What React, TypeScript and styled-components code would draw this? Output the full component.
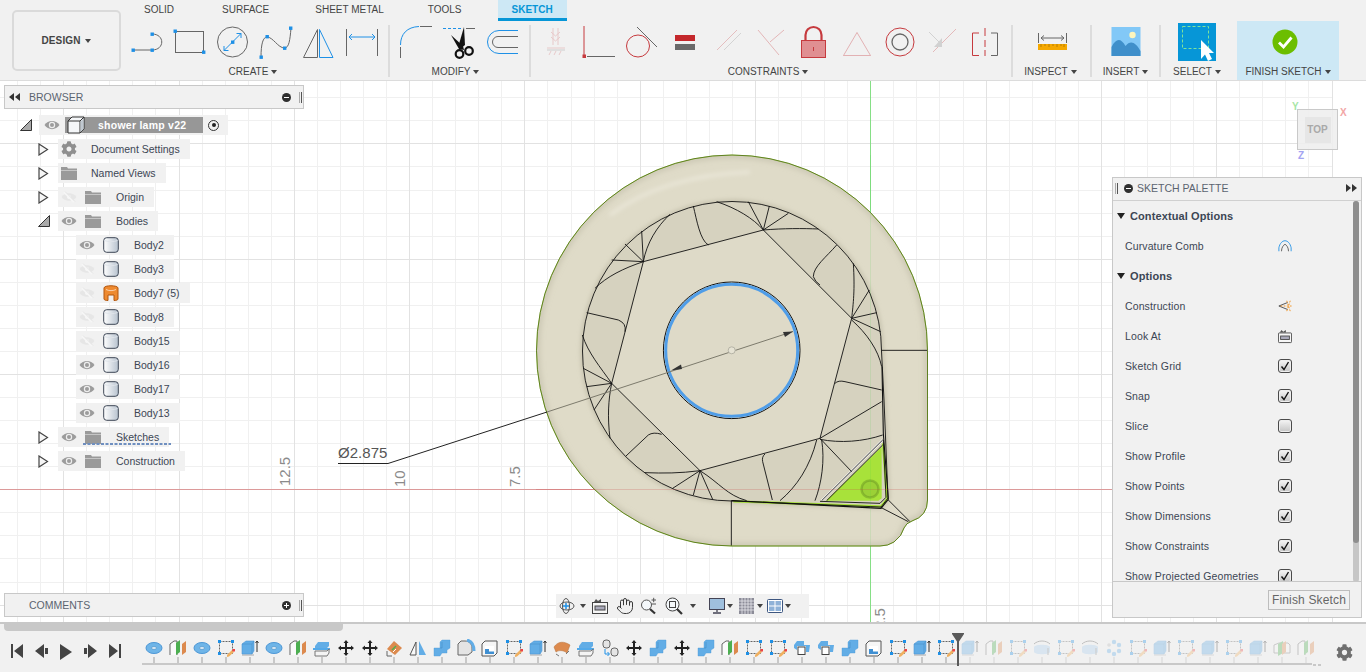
import React from 'react';
import styled, { createGlobalStyle } from 'styled-components';
import { FaCog } from 'react-icons/fa';
import { Hand } from 'lucide-react';

const Global = createGlobalStyle`
  html, body { margin: 0; padding: 0; background: #fff; }
  body { font-family: "Liberation Sans", Arial, sans-serif; overflow: hidden; }
  * { box-sizing: border-box; }
`;

const Page = styled.div`width:1366px;height:672px;display:flex;flex-direction:column;overflow:hidden;color:#3c4654;`;

/* ---------- toolbar ---------- */
const Toolbar = styled.header`height:81px;flex:none;display:flex;background:#f1f1f1;border-bottom:1px solid #dcdcdc;`;
const DesignBtn = styled.div`
  width:109px;height:61px;margin:10px 0 0 12px;flex:none;border:2px solid #dadada;border-radius:5px;
  display:flex;align-items:center;justify-content:center;gap:5px;font-size:10px;font-weight:bold;color:#444;letter-spacing:.1px;
`;
const Caret = styled.i`display:inline-block;width:0;height:0;border-left:3px solid transparent;border-right:3px solid transparent;border-top:4px solid #444;`;
const Ribbon = styled.div`flex:1;display:flex;flex-direction:column;min-width:0;`;
const Tabs = styled.nav`height:21px;display:flex;`;
const Tab = styled.div<{ $on?: boolean; $ml?: number }>`
  height:21px;padding:${p => p.$on ? '0 14px' : '0 23px'};margin-left:${p => p.$ml ?? 0}px;font-size:10px;line-height:20px;
  color:${p => p.$on ? '#0696d7' : '#444'};font-weight:${p => p.$on ? 'bold' : 'normal'};
  background:${p => p.$on ? '#cde8f5' : 'transparent'};
  border-bottom:${p => p.$on ? '3px solid #0696d7' : '0'};
`;
const Groups = styled.div`flex:1;display:flex;padding-left:5px;`;
const Group = styled.section<{ $w: number; $pl?: number }>`
  width:${p => p.$w}px;flex:none;padding-left:${p => p.$pl ?? 0}px;padding-top:3px;position:relative;
  display:flex;flex-direction:column;
`;
const Sep = styled.div`width:2px;height:52px;margin-top:4px;background:#dcdcdc;flex:none;`;
const IconRow = styled.div<{ $center?: boolean; $pr?: number }>`
  height:36px;display:flex;padding-right:${p => p.$pr ?? 0}px;
  justify-content:${p => p.$center ? 'center' : 'flex-start'};align-items:center;
`;
const GroupLabel = styled.div<{ $pr?: number }>`
  margin-top:6px;padding-right:${p => p.$pr ?? 0}px;font-size:10px;line-height:12px;color:#444;display:flex;justify-content:center;align-items:center;gap:3px;
`;
const FinishGroup = styled(Group)`background:#cde8f5;height:59px;`;

const T = ({ x, children }: { x: number; children: React.ReactNode }) => (
  <svg width={43} height={36} viewBox={`${x} 24 43 36`} style={{ flex: 'none' }}>{children}</svg>
);
const Sq = ({ x, y }: { x: number; y: number }) => <rect x={x - 1.5} y={y - 1.5} width={3.4} height={3.4} fill="#1e90e6" />;
const G = '#666';
const B = '#1e90e6';
const R = '#c63a3e';

const CreateIcons = () => (
  <IconRow>
    <T x={126}><g fill="none" stroke={G}><path d="M134 50H152M152 34C165 34 165 50 152 50" /></g><Sq x={133} y={50} /><Sq x={152} y={34} /><Sq x={152} y={50} /></T>
    <T x={169}><rect x="175.500" y="31.500" width="28" height="21" fill="none" stroke={G} /><Sq x={175} y={31} /><Sq x={203.500} y={52} /></T>
    <T x={212}><circle cx="232.500" cy="42" r="15" fill="none" stroke={G} /><path d="M224 50.500L241 33.500M224 46V50.500H228.500M236.500 33.500H241V38" fill="none" stroke={B} /><Sq x={232.500} y={42} /></T>
    <T x={255}><path d="M261 57C261 44 263 37 267 37C273 37 278 48 284.500 48C289 48 290 40 291 28" fill="none" stroke={G} /><Sq x={261} y={57} /><Sq x={267} y={36.500} /><Sq x={284.500} y={48} /><Sq x={290.500} y={28} /></T>
    <T x={298}><path d="M317.500 29.500V57.500H303.500Z" fill="none" stroke={G} /><path d="M319.500 29.500L333 57.500H319.500Z" fill="none" stroke={B} /></T>
    <T x={341}><path d="M346.500 29V56M377.500 29V56" stroke={G} /><path d="M349 37H375M352 34L349 37L352 40M372 34L375 37L372 40" fill="none" stroke={B} /></T>
  </IconRow>
);
const ModifyIcons = () => (
  <IconRow>
    <T x={395}><path d="M400.500 45C400.500 34 407 27 419 26.500" fill="none" stroke={B} /><path d="M400.500 47V58M420 26.500H432" stroke={G} /></T>
    <T x={438}><path d="M443 28.500H462" stroke={B} strokeDasharray="3 2" /><path d="M466 28.500H475" stroke={G} /><path d="M451 35L463 46L464 50L459 49Z" fill="#111" /><path d="M464 27L465 45L460 49L459 44Z" fill="#111" /><circle cx="459.500" cy="54" r="3.800" fill="none" stroke="#111" strokeWidth="2.200" /><circle cx="469" cy="51" r="3.800" fill="none" stroke="#111" strokeWidth="2.200" /></T>
    <T x={481}><path d="M518 30.500H499A11.500 11.500 0 0 0 499 53.500H518" fill="none" stroke={B} /><path d="M518 36.500H498A5.500 5.500 0 0 0 498 47.500H518" fill="none" stroke={G} /></T>
  </IconRow>
);
const ConstraintIcons = () => (
  <IconRow>
    <T x={535}><g opacity=".22" fill="none" stroke={R}><path d="M553 28V45M558 28V45" /><path d="M551 32L555.500 36L560 32M551 37L555.500 41L560 37" /><path d="M547 48H565" /><path d="M549 55L551 51M554 55L556 51M559 55L561 51" /></g><path d="M547 50H565" stroke="#999" opacity=".4" /></T>
    <T x={578}><path d="M584 26V57" stroke={R} /><rect x="582.500" y="54.500" width="3.500" height="3.500" fill={R} /><path d="M587 56.500H615" stroke={G} /></T>
    <T x={621}><ellipse cx="638" cy="46" rx="11.500" ry="11" fill="none" stroke={R} /><path d="M637 27L657 47" stroke={G} /></T>
    <T x={664}><rect x="675" y="35" width="20" height="6" fill="#c4282c" /><rect x="675" y="44" width="20" height="6" fill="#6a6a6a" /></T>
    <T x={707}><g opacity=".28" fill="none"><path d="M717 50L737 30" stroke={R} /><path d="M724 50L741 33" stroke="#888" /></g></T>
    <T x={750}><g opacity=".32" fill="none" stroke={R}><path d="M758 30L779 55" /><path d="M770 42L784 30" /></g></T>
    <T x={793}><path d="M805.500 41V35A8 8 0 0 1 821.500 35V41" fill="none" stroke={R} strokeWidth="2.200" /><rect x="801.500" y="40.500" width="24" height="17" fill="#e08f92" stroke={R} /><path d="M813.500 47V51" stroke={R} /></T>
    <T x={836}><path d="M857 32.500L870.500 55.500H843.500Z" fill="none" stroke={R} opacity=".35" /></T>
    <T x={879}><circle cx="900" cy="42" r="14" fill="none" stroke={R} /><circle cx="900" cy="42" r="8" fill="none" stroke={G} strokeWidth="1.300" /></T>
    <T x={922}><g opacity=".3" fill="none"><path d="M933 52L956 29" stroke={R} /><path d="M929 32L941 44" stroke="#888" /><path d="M942 38V47H934Z" fill="#888" stroke="none" /></g></T>
    <T x={965}><path d="M979 33H972.500V55.500H979" fill="none" stroke={R} /><path d="M991 33H997.500V55.500H991" fill="none" stroke={G} /><path d="M985 28V36M985 40V47M985 50V56" stroke={R} /></T>
  </IconRow>
);

const SmallIcon = styled.svg`flex:none;display:block;`;
const Inspect = () => (
  <SmallIcon width={36} height={36} viewBox="1033 24 36 36">
    <path d="M1037.500 33V43M1065.500 33V43" stroke={G} /><path d="M1040 38H1063M1043 35.500L1040 38L1043 40.500M1060 35.500L1063 38L1060 40.500" fill="none" stroke={G} />
    <rect x="1037" y="44" width="29" height="6" fill="#f5a800" /><path d="M1040 44V47M1044 44V46M1048 44V47M1052 44V46M1056 44V47M1060 44V46M1063 44V47" stroke="#a26e00" strokeWidth=".7" />
  </SmallIcon>
);
const Insert = () => (
  <SmallIcon width={36} height={36} viewBox="1107.500 24 36 36">
    <rect x="1111" y="27" width="29" height="29" fill="#82c8f7" /><circle cx="1132" cy="35" r="3.200" fill="#fdf6bd" />
    <path d="M1111 56V47C1116 38 1120 38 1125 46C1130 40 1135 42 1140 51V56Z" fill="#3f8fca" />
  </SmallIcon>
);
const SelectIco = () => (
  <SmallIcon width={38} height={38} viewBox="1179 23 38 38">
    <rect x="1179" y="23" width="38" height="38" fill="#0696d7" />
    <rect x="1183.500" y="26.500" width="26" height="22" fill="none" stroke="#7fe39a" strokeDasharray="3 2" />
    <path d="M1202 40V59L1206 54.500L1209 61L1213 59L1210 53H1215Z" fill="#fff" />
  </SmallIcon>
);
const FinishIco = () => (
  <SmallIcon width={28} height={28} viewBox="1272 28 28 28">
    <circle cx="1286" cy="42" r="12.500" fill="#6cbe00" /><path d="M1280 42.500L1284.500 47L1292.500 37.500" fill="none" stroke="#fff" strokeWidth="2.800" />
  </SmallIcon>
);

/* ---------- viewport ---------- */
const Viewport = styled.main`flex:1;position:relative;background:#fff;overflow:hidden;`;
const SceneSvg = styled.svg`
  position:absolute;left:0;top:-81px;width:1366px;height:672px;
  .n * { vector-effect: non-scaling-stroke; }
`;
const Panel = styled.aside<{ $top: number }>`
  position:absolute;left:4px;top:${p => p.$top}px;width:300px;height:24px;background:#f1f1f1;border:1px solid #c8c8c8;
  display:flex;align-items:center;font-size:10.500px;color:#5b6470;
`;
const PanelTitle = styled.span`flex:1;`;
const DoubleArrow = styled.span`
  display:block;width:24px;padding-left:4px;flex:none;svg{display:block;}
`;
const RoundBtn = styled.span<{ $mr?: number }>`
  width:9px;height:9px;border-radius:50%;background:#2f2f2f;flex:none;position:relative;
  margin-right:${p => p.$mr ?? 8}px;
  &::before{content:'';position:absolute;left:2px;right:2px;top:4px;height:1px;background:#fff;}
`;
const PlusBtn = styled(RoundBtn)`
  &::after{content:'';position:absolute;top:2px;bottom:2px;left:4px;width:1px;background:#fff;}
`;
const Grip = styled.span<{ $mr?: number }>`width:3px;height:11px;border-left:1px solid #aaa;border-right:1px solid #555;flex:none;margin-right:${p => p.$mr ?? 1}px;`;

const Tree = styled.div`position:absolute;left:0;top:32px;width:300px;`;
const TreeRow = styled.div<{ $pl: number }>`height:24px;padding-left:${p => p.$pl}px;display:flex;align-items:center;font-size:10.500px;color:#3c4654;position:relative;`;
const ExpSlot = styled.span<{ $w?: number }>`width:${p => p.$w ?? 20}px;flex:none;display:flex;align-items:center;svg{display:block;}`;
const RowChip = styled.div`height:20px;display:flex;align-items:center;background:#f1f1f1;padding-right:10px;`;
const RootChip = styled(RowChip)`padding-right:0;width:189px;`;
const IconSlot = styled.span<{ $w: number }>`width:${p => p.$w}px;flex:none;display:flex;align-items:center;justify-content:center;`;
const RowText = styled.span`white-space:nowrap;`;
const RootTitle = styled.div`
  height:16px;width:138px;background:#979797;color:#fff;font-weight:bold;font-size:10.500px;display:flex;align-items:center;
  padding-left:33px;position:relative;white-space:nowrap;letter-spacing:.25px;
`;
const RootCube = styled.svg`position:absolute;left:2px;top:-1px;`;
const Radio = styled.span`width:11px;height:11px;border:1px solid #333;border-radius:50%;margin-left:5px;display:flex;align-items:center;justify-content:center;&::after{content:'';width:4px;height:4px;border-radius:50%;background:#222;}`;
const SketchHatch = styled.svg`position:absolute;left:83px;top:16px;`;

const Eye = ({ off }: { off?: boolean }) => off ? (
  <svg width="16" height="12" viewBox="0 0 16 12"><path d="M0.500 6C4 1 12 1 15.500 6C12 11 4 11 0.500 6Z" fill="#e6e6e6" /><circle cx="8" cy="6" r="2" fill="#f6f6f6" /><path d="M3 1L13 11" stroke="#f6f6f6" strokeWidth="2" /><path d="M4 .500L14 10.500" stroke="#e3e3e3" /></svg>
) : (
  <svg width="16" height="12" viewBox="0 0 16 12"><path d="M0.500 6C4 .500 12 .500 15.500 6C12 11.500 4 11.500 0.500 6Z" fill="#9c9c9c" /><circle cx="8" cy="6" r="3.200" fill="#eee" /><circle cx="8" cy="6" r="2" fill="#9c9c9c" /></svg>
);
const Folder = () => <svg width="16" height="13" viewBox="0 0 16 13"><path d="M0 0H6L7 1.500H16V3H0Z" fill="#9a9a9a" /><rect y="3.500" width="16" height="9.500" fill="#9a9a9a" /></svg>;
const Cyl = ({ orange }: { orange?: boolean }) => (
  <svg width="16" height="16" viewBox="0 0 16 16">
    <defs>
      <linearGradient id="cy" x1="0" x2="1"><stop offset="0" stopColor="#fff" /><stop offset="1" stopColor="#b8c3cf" /></linearGradient>
    </defs>
    {orange ? (
      <g>
        <path d="M1 3C1 0 15 0 15 3V14C15 15 13 15.500 11 15.500V10H5V15.500C3 15.500 1 15 1 14Z" fill="#ee8a30" stroke="#b3560e" />
        <path d="M3 4.500C6 6 10 6 13 4.500" fill="none" stroke="#fff" opacity=".6" />
      </g>
    ) : (
      <g>
        <rect x=".700" y=".700" width="14.600" height="14.600" rx="3" fill="url(#cy)" stroke="#3e4756" />
        <path d="M1.500 3.500C5 5 11 5 14.500 3.500" fill="none" stroke="#dfe4ea" />
      </g>
    )}
  </svg>
);
const ExpRight = () => <svg width="11" height="13" viewBox="0 0 11 13"><path d="M1 1L9.500 6.500L1 12Z" fill="#f6f6f6" stroke="#444" strokeWidth="1.200" /></svg>;
const ExpDown = () => <svg width="12" height="12" viewBox="0 0 12 12"><path d="M11.500 .500V11.500H.500Z" fill="#aaa" stroke="#333" /></svg>;

const bodies: [string, boolean, boolean?][] = [
  ['Body2', false], ['Body3', true], ['Body7 (5)', true, true], ['Body8', true], ['Body15', true],
  ['Body16', false], ['Body17', false], ['Body13', false],
];

/* palette */
const Palette = styled.aside`
  position:absolute;left:1112px;top:96px;width:250px;height:441px;background:#f1f1f1;border:1px solid #c8c8c8;
  display:flex;flex-direction:column;color:#3c4654;
`;
const PalHead = styled.div`height:23px;flex:none;border-bottom:1px solid #d0d0d0;display:flex;align-items:center;padding:0 4px 2px 2px;font-size:10.500px;color:#5b6470;`;
const PalBody = styled.div`flex:1;position:relative;overflow:hidden;`;
const PalFoot = styled.div`height:36px;flex:none;border-top:1px solid #c8c8c8;display:flex;align-items:center;justify-content:flex-end;padding-right:11px;`;
const FinishBtn = styled.div`width:82px;height:20px;border:1px solid #bdbdbd;font-size:12px;color:#666;display:flex;align-items:center;justify-content:center;letter-spacing:.15px;`;
const SecRow = styled.div`height:30px;display:flex;align-items:center;font-size:11px;font-weight:bold;padding-left:4px;gap:5px;color:#3c4654;letter-spacing:.1px;`;
const SecCaret = styled.i`display:block;width:0;height:0;border-left:4px solid transparent;border-right:4px solid transparent;border-top:6px solid #222;`;
const OptRow = styled.div`height:30px;display:flex;align-items:center;font-size:10.500px;padding-left:12px;position:relative;`;
const OptLabel = styled.span`width:153px;flex:none;white-space:nowrap;letter-spacing:.12px;`;
const Check = styled.span`
  width:14px;height:14px;border:1px solid #4a4a4a;border-radius:3px;display:flex;align-items:center;justify-content:center;
  background:linear-gradient(#f5f5f5,#c4c4c4);
  box-shadow:inset 0 0 0 1px #eee;
  svg{display:block;}
`;
const OptIcon = styled.span`width:14px;display:flex;justify-content:center;`;
const ScrollTrack = styled.div`position:absolute;right:2px;top:0;width:6px;height:381px;background:#c6c6c6;border-radius:3px;`;
const ScrollThumb = styled.div`width:6px;height:342px;background:#8e8e8e;border-radius:3px;`;

const ViewCube = styled.div`
  position:absolute;left:1297px;top:28px;width:41px;height:41px;background:rgba(238,238,238,.9);border:1px solid #c9c9c9;
  display:flex;align-items:center;justify-content:center;
`;
const CubeFace = styled.div`width:26px;height:26px;background:#e6e6e6;color:#a9a9a9;font-size:10px;font-weight:bold;display:flex;align-items:center;justify-content:center;`;
const AxisTag = styled.span<{ $c: string; $x: number; $y: number }>`position:absolute;left:${p => p.$x}px;top:${p => p.$y}px;color:${p => p.$c};font-size:10px;font-weight:bold;line-height:10px;`;

const NavBar = styled.div`position:absolute;left:556px;top:513px;width:253px;height:24px;background:#f1f1f1;display:flex;align-items:center;`;
const NavIcon = styled.svg<{ $ml: number }>`display:block;flex:none;margin-left:${p => p.$ml}px;`;
const NavCaret = styled.i<{ $ml: number }>`display:block;flex:none;margin-left:${p => p.$ml}px;width:0;height:0;border-left:3.500px solid transparent;border-right:3.500px solid transparent;border-top:4px solid #444;`;
const HandWrap = styled.span`display:block;flex:none;margin-left:8px;line-height:0;`;

/* timeline */
const Timeline = styled.footer`height:50px;flex:none;background:#f1f1f1;border-top:2px solid #c8c8c8;position:relative;`;
const ScrollBar = styled.div`width:339px;height:7px;margin-left:4px;background:#c8c8c8;border-radius:0 0 4px 4px;`;
const TimelineRow = styled.div`display:flex;height:24px;margin-top:8px;`;
const Controls = styled.div`width:142px;flex:none;display:flex;align-items:flex-start;padding:5px 0 0 11px;gap:12px;svg{display:block;flex:none;}`;
const Track = styled.div`width:1170px;flex:none;height:26px;border-bottom:2px solid #c8c8c8;display:flex;align-items:flex-start;position:relative;`;
const Step = styled.div<{ $fade: boolean }>`width:24px;flex:none;height:24px;display:flex;flex-direction:column;align-items:center;position:relative;opacity:${p => p.$fade ? .32 : 1};`;
const Tick = styled.span`width:2px;height:6px;background:#c8c8c8;margin-top:auto;`;
const Marker = styled.svg`position:absolute;left:951px;top:9px;`;
const GearSlot = styled.div`position:absolute;left:1336px;top:20px;color:#6f6f6f;line-height:0;`;
const Dashes = styled.span`position:absolute;left:1313px;top:40px;width:8px;height:2px;background:repeating-linear-gradient(90deg,#c8c8c8 0 3px,transparent 3px 5px);`;

const bl = '#62ade6';
const TL = ({ k }: { k: string }) => {
  let c: React.ReactNode = null;
  switch (k) {
    case 'disc': c = <g><ellipse cx="10" cy="9" rx="8" ry="5.500" fill="#6fb5e8" stroke="#4d97d6" /><ellipse cx="10" cy="9" rx="2.500" ry="1.300" fill="#eaf4fb" stroke="#3f7fb5" strokeWidth=".5" /></g>; break;
    case 'plane': c = <g><path d="M2 16V5L6 2H9V16" fill="#fafafa" stroke="#666" /><path d="M8 4L12 1V13L8 16Z" fill="#4caf50" /><path d="M14 5L18 2V13L14 16Z" fill="#dc8a4e" /></g>; break;
    case 'planeC': c = <g><path d="M2 14V6L7 4H16L18 6V14H2Z" fill="#fafafa" stroke="#777" /><path d="M6 5L11 2V14L6 17Z" fill="#4caf50" /><path d="M10 5L14 2V13L10 16Z" fill="#dc8a4e" /></g>; break;
    case 'sketch': c = <g><rect x="3.500" y="2.500" width="13" height="12" fill="none" stroke="#666" strokeDasharray="2 1" /><rect x="2" y="1" width="3" height="3" fill={B} /><rect x="15" y="1" width="3" height="3" fill={B} /><rect x="2" y="13" width="3" height="3" fill={B} /><path d="M11 16L16 11L18 13L13 17.500L11 18Z" fill="#f0b060" /><rect x="16.500" y="10" width="2.500" height="2.500" fill="#e44" /></g>; break;
    case 'extrude': c = <g><path d="M2 15H14V17H2Z" fill="#ccc" /><path d="M2 5L6 2H14V12L12 15H2Z" fill={bl} stroke="#4d97d6" strokeWidth=".6" /><path d="M2 5H12L14 2M12 5V15" fill="none" stroke="#4488c0" strokeWidth=".5" /><path d="M17 13V2M15.500 4L17 2L18.500 4" fill="none" stroke="#333" /></g>; break;
    case 'split': c = <g><path d="M3 7L6 3H17V7L15 9H3Z" fill={bl} /><path d="M1 10H18" stroke={B} strokeWidth="1.500" /><path d="M3 12H15L17 10V14L15 17H3Z" fill="#f4f4f4" stroke="#777" /></g>; break;
    case 'move': c = <path d="M10 1L12.500 4H11V8H15V6.500L18 9L15 11.500V10H11V14H12.500L10 17L7.500 14H9V10H5V11.500L2 9L5 6.500V8H9V4H7.500Z" fill="#222" />; break;
    case 'orange': c = <g><path d="M3 10L10 2L18 9L11 16Z" fill="#dc8a4e" /><path d="M8 11L12 7" stroke="#4caf50" strokeWidth="1.500" /><path d="M3 12V17H8" fill="none" stroke="#666" /><path d="M9 13L12 10" stroke="#fff" /></g>; break;
    case 'mirror': c = <g><path d="M8 3V16H2Z" fill="#fafafa" stroke="#555" /><path d="M11 2L18 16H11Z" fill={bl} /></g>; break;
    case 'combine': c = <g><path d="M2 9H8V3L10 1H18V9L15 11V14H10L8 17H2Z" fill={bl} stroke="#4d97d6" strokeWidth=".4" /><path d="M8 9H10V3" fill="none" stroke="#3f85bf" strokeWidth=".5" /></g>; break;
    case 'fillet': c = <g><path d="M2 16V5L5 2H9C13 2 16 5 16 9V13L12 16Z" fill="#e4e4e4" stroke="#666" /><path d="M11 1C15 2 18 6 18 12" fill="none" stroke={bl} strokeWidth="3" /></g>; break;
    case 'shell': c = <g><path d="M2 5L5 2H17V14L14 17H2Z" fill="#f6f6f6" stroke="#555" /><path d="M5 7H14V15H5Z" fill="#fff" /><path d="M5 15V10H9V12.500H14V15Z" fill="#3f8fd2" /></g>; break;
    case 'patch': c = <g><path d="M2 8C6 2 12 2 18 6L15 14C11 11 7 11 4 13Z" fill="#dc8a4e" stroke="#b56a30" strokeWidth=".5" /><path d="M4 15L7 17M14 15L17 12" stroke="#777" /></g>; break;
    case 'joint': c = <g><rect x="3" y="1" width="7" height="8" rx="3" fill="#e4e4e4" stroke="#666" /><rect x="11" y="9" width="7" height="8" rx="3" fill="#e4e4e4" stroke="#666" /><path d="M5 10V15H9M7.500 13L9.500 15L7.500 17" fill="none" stroke={B} /></g>; break;
    case 'bool': c = <g><path d="M2 6L5 2H12V6H18L17 13H14V7H5V11L2 9Z" fill={bl} /><rect x="6" y="8" width="7" height="7.500" fill="#fff" stroke="#444" /></g>; break;
    case 'revolve': c = <g><path d="M2 8C3 5 17 5 18 8V13C17 16 3 16 2 13Z" fill="#a9cfee" /><path d="M2 5C6 1 14 1 18 5" fill="none" stroke="#555" /><path d="M16 16V9" stroke="#777" /></g>; break;
    case 'pattern': c = <g fill={bl}><circle cx="10" cy="3" r="2.200" /><circle cx="15" cy="6" r="2.200" /><circle cx="15" cy="12" r="2.200" /><circle cx="10" cy="15" r="2.200" /><circle cx="5" cy="12" r="2.200" /><circle cx="5" cy="6" r="1.800" fill="#bbb" /></g>; break;
  }
  return <svg width="20" height="18" viewBox="0 0 20 18" style={{ display: 'block' }}>{c}</svg>;
};

const tl = ['disc','plane','disc','sketch','extrude','disc','plane','split','move','move','orange','mirror','combine','fillet','shell','sketch','extrude','patch','split','joint','move','combine','move','combine','plane','sketch','sketch','bool','bool','combine','shell','sketch','extrude','sketch','extrude','plane','sketch','revolve','sketch','revolve','pattern','sketch','extrude','sketch','extrude','sketch','extrude','planeC','plane'];

/* model */
const OUT = 'M732 155A195.500 195.500 0 0 1 927.500 350.500V500Q927.500 516 912 521Q906 523 904 528Q902 536 894 542Q888 546 880 546L732 546A195.500 195.500 0 0 1 732 155Z';
const HOLE = 'M732 201.500A149.500 149.500 0 0 1 881.500 351L884 400L888 498L881 507L732 501A149.500 149.500 0 0 1 582.500 351A149.500 149.500 0 0 1 732 201.500Z';
const HEX = 'M370 335L730 240L995 505L900 865L540 962L275 700Z';
const wires = [
  'M370 335L730 240','M730 240L995 505','M995 505L900 865','M900 865L540 962','M540 962L275 700','M275 700L370 335',
  'M520 168C530 210 540 270 565 285','M590 155C650 175 700 205 730 240','M685 155L730 240','M748 168L730 240','M805 190L730 240',
  'M730 240C790 235 850 235 895 237','M950 285C920 320 880 350 880 380Q885 395 900 405','M1000 340C1005 420 1000 460 995 505',
  'M1048 420L995 505','M1070 488L995 505','M1082 545L995 505','M995 510C1040 550 1075 600 1085 650','M945 700Q955 690 975 695L1085 720',
  'M900 865L1085 755','M900 868C960 880 1030 875 1088 855','M900 865L995 965','M905 870C915 930 905 1000 885 1052','M890 870C870 950 830 1010 780 1052',
  'M735 912Q725 920 728 935L757 1050','M540 962C600 1000 620 1035 680 1052','M540 962L578 1048','M540 962L520 1035','M540 962L458 1015','M540 962C480 970 430 970 375 968',
  'M318 918L385 855Q400 845 425 853','M270 865C262 800 265 750 275 700','M222 780L275 700','M200 710L275 700','M190 655L275 700','M275 700C240 650 205 610 187 555',
  'M200 488L295 510Q320 520 315 545','M225 415C260 380 310 355 370 335','M275 330L370 335','M315 282L370 335','M365 243L370 335','M370 335C380 280 410 230 450 193',
  'M1085 601H1222','M634 1052V1188','M1082 1072L1165 1115','M1105 1050L1170 1115','M905 1052L1088 870',
];

const gridX: number[] = [];
for (let i = -37; i <= 20; i++) gridX.push(i);
const gridY: number[] = [];
for (let i = -17; i <= 6; i++) gridY.push(i);
const X0 = 870.3, Y0 = 489.3, S = 23.06;

const Scene = () => (
  <SceneSvg viewBox="0 0 1366 672">
    <defs>
      <filter id="bl" x="-10%" y="-10%" width="120%" height="120%"><feGaussianBlur stdDeviation="3" /></filter>
      <filter id="bl2" x="-10%" y="-10%" width="120%" height="120%"><feGaussianBlur stdDeviation="2" /></filter>
      <clipPath id="co"><path d={OUT} /></clipPath>
      <clipPath id="ch"><path d={HOLE} /></clipPath>
    </defs>
    {gridX.map(i => { const x = Math.round(X0 + i * S) + .5; const maj = i % 5 === 0; return x > 0 && x < 1332 && !maj ? <path key={'x' + i} d={`M${x} 81V622`} stroke="#f0f0f0" /> : null; })}
    {gridY.map(i => { const y = Math.round(Y0 + i * S) + .5; const maj = i % 5 === 0; return y > 81 && y < 622 && !maj ? <path key={'y' + i} d={`M0 ${y}H1332`} stroke="#f0f0f0" /> : null; })}
    {gridX.map(i => { const x = Math.round(X0 + i * S) + .5; return i % 5 === 0 && x > 0 && x < 1333 ? <path key={'X' + i} d={`M${x} 81V622`} stroke="#e2e2e2" /> : null; })}
    {gridY.map(i => { const y = Math.round(Y0 + i * S) + .5; return i % 5 === 0 && y > 81 && y < 622 ? <path key={'Y' + i} d={`M0 ${y}H1332`} stroke="#e2e2e2" /> : null; })}
    <path d="M870.500 81V622" stroke="#86df86" />
    <path d="M0 489.500H1112" stroke="#dc9a9a" />
    <g fill="#8a8a8a" fontFamily="Liberation Sans, Arial, sans-serif" fontSize="15">
      <text transform="translate(290 486) rotate(-90)">12.5</text>
      <text transform="translate(405 487) rotate(-90)">10</text>
      <text transform="translate(520 487) rotate(-90)">7.5</text>
      <text transform="translate(885 629) rotate(-90)">2.5</text>
    </g>
    <path d={OUT} fill="#dfdbc8" />
    <g clipPath="url(#co)">
      <path d={OUT} fill="none" stroke="#b5b19c" strokeWidth="3" filter="url(#bl)" />
      <path d="M610 215C650 185 700 174 750 172" fill="none" stroke="#ebe8da" strokeWidth="3" filter="url(#bl2)" />
      <path d={HOLE} fill="none" stroke="#c4c0ab" strokeWidth="4" filter="url(#bl2)" />
    </g>
    <path d={HOLE} fill="#d6d2bf" />
    <g className="n" transform="translate(520 150) scale(.33333)">
      <path d={HEX} fill="#dedac8" />
      <path d="M918 1052L1085 890V1045L1075 1052Z" fill="#a8e23a" />
      <path d="M1089 880L1101 1048L1083 1069L640 1054" fill="none" stroke="#a8e23a" strokeWidth="2.400" />
      <path d="M905 1052L1088 870" stroke="#fff" strokeWidth="2" />
      {wires.map((d, i) => <path key={i} d={d} fill="none" stroke="#111" strokeWidth=".9" />)}
      <path d="M920 1052L1088 885" stroke="#111" strokeWidth=".9" />
      <path d="M1086 650L1090 850L1105 1048L1083 1075L640 1052L634 1052" fill="none" stroke="#111" strokeWidth="1.100" />
      <path d="M1090 870L1098 1042L1080 1060L900 1054" fill="none" stroke="#111" strokeWidth=".9" />
    </g>
    <path d={HOLE} fill="none" stroke="#111" strokeWidth=".9" />
    <path d={OUT} fill="none" stroke="#a6e432" strokeWidth="1" />
    <path d={OUT} fill="none" stroke="#111" strokeWidth=".6" opacity=".8" />
    <circle cx="870" cy="489" r="8.500" fill="rgba(110,150,40,.22)" stroke="rgba(90,130,30,.38)" strokeWidth="2.500" />
    <path d="M536 489.500H928" stroke="#c44" opacity=".22" />
    <path d="M870.500 155V546" stroke="#4c4" opacity=".12" />
    <circle cx="731.700" cy="350.300" r="68.300" fill="none" stroke="#111" />
    <circle cx="731.700" cy="350.300" r="66" fill="none" stroke="#4f9de8" strokeWidth="3" />
    <path d="M338 463.500H388L547 412" fill="none" stroke="#222" />
    <path d="M547 412L793 331.500" stroke="#7c7a6c" />
    <path d="M671 370.500L681 364.500L682 369Z" fill="#333" />
    <path d="M793 331.500L783 332L785 337Z" fill="#333" />
    <circle cx="731.700" cy="350.300" r="3.500" fill="#e6e3d4" stroke="#b5b3a6" />
    <text x="338" y="458" fontFamily="Liberation Sans, Arial, sans-serif" fontSize="15" fill="#555" letterSpacing=".05">Ø2.875</text>
  </SceneSvg>
);

const checkMark = <svg width="10" height="10" viewBox="0 0 10 10"><path d="M1.500 5.500L4 8.500L8.500 1" fill="none" stroke="#111" strokeWidth="1.400" /></svg>;
const opts: [string, boolean][] = [['Sketch Grid', true], ['Snap', true], ['Slice', false], ['Show Profile', true], ['Show Points', true], ['Show Dimensions', true], ['Show Constraints', true], ['Show Projected Geometries', true]];

export default function App() {
  return (
    <Page>
      <Global />
      <Toolbar>
        <DesignBtn>DESIGN <Caret /></DesignBtn>
        <Ribbon>
          <Tabs>
            <Tab>SOLID</Tab><Tab $ml={2}>SURFACE</Tab><Tab>SHEET METAL</Tab><Tab $ml={-2}>TOOLS</Tab><Tab $on $ml={13}>SKETCH</Tab>
          </Tabs>
          <Groups>
            <Group $w={262}><CreateIcons /><GroupLabel $pr={8}>CREATE <Caret /></GroupLabel></Group><Sep />
            <Group $w={139} $pl={5}><ModifyIcons /><GroupLabel $pr={13}>MODIFY <Caret /></GroupLabel></Group><Sep />
            <Group $w={480} $pl={4}><ConstraintIcons /><GroupLabel $pr={10}>CONSTRAINTS <Caret /></GroupLabel></Group><Sep />
            <Group $w={77}><IconRow $center><Inspect /></IconRow><GroupLabel $pr={2}>INSPECT <Caret /></GroupLabel></Group><Sep />
            <Group $w={67}><IconRow $center><Insert /></IconRow><GroupLabel>INSERT <Caret /></GroupLabel></Group><Sep />
            <Group $w={76}><IconRow $center $pr={4}><SelectIco /></IconRow><GroupLabel $pr={4}>SELECT <Caret /></GroupLabel></Group>
            <FinishGroup $w={102}><IconRow $center $pr={6}><FinishIco /></IconRow><GroupLabel>FINISH SKETCH <Caret /></GroupLabel></FinishGroup>
          </Groups>
        </Ribbon>
      </Toolbar>
      <Viewport>
        <Scene />
        <Panel $top={4}>
          <DoubleArrow><svg width="11" height="8" viewBox="0 0 11 8"><path d="M5 0V8L0 4ZM11 0V8L6 4Z" fill="#333" /></svg></DoubleArrow>
          <PanelTitle>BROWSER</PanelTitle><RoundBtn /><Grip />
        </Panel>
        <Tree>
          <TreeRow $pl={20}>
            <ExpSlot $w={19}><ExpDown /></ExpSlot>
            <RootChip>
              <IconSlot $w={26}><Eye /></IconSlot>
              <RootTitle><RootCube width="18" height="18" viewBox="0 0 18 18"><path d="M1 5L5 1H17V13L13 17H1Z" fill="#f4f6f8" stroke="#333" /><path d="M13 5V17M13 5H1M13 5L17 1" fill="none" stroke="#333" /><path d="M13.500 5.500L16.500 2.500V13L13.500 16Z" fill="#c0c8d0" /></RootCube>shower lamp v22</RootTitle>
              <Radio />
            </RootChip>
          </TreeRow>
          <TreeRow $pl={38}><ExpSlot><ExpRight /></ExpSlot><RowChip><IconSlot $w={22}><FaCog size={16} color="#8f8f8f" /></IconSlot><IconSlot $w={11} /><RowText>Document Settings</RowText></RowChip></TreeRow>
          <TreeRow $pl={38}><ExpSlot><ExpRight /></ExpSlot><RowChip><IconSlot $w={22}><Folder /></IconSlot><IconSlot $w={11} /><RowText>Named Views</RowText></RowChip></TreeRow>
          <TreeRow $pl={38}><ExpSlot><ExpRight /></ExpSlot><RowChip><IconSlot $w={22}><Eye off /></IconSlot><IconSlot $w={25}><Folder /></IconSlot><IconSlot $w={11} /><RowText>Origin</RowText></RowChip></TreeRow>
          <TreeRow $pl={38}><ExpSlot><ExpDown /></ExpSlot><RowChip><IconSlot $w={22}><Eye /></IconSlot><IconSlot $w={25}><Folder /></IconSlot><IconSlot $w={11} /><RowText>Bodies</RowText></RowChip></TreeRow>
          {bodies.map(([n, off, or]) => (
            <TreeRow $pl={76} key={n}><RowChip><IconSlot $w={22}>{off ? <Eye off /> : <Eye />}</IconSlot><IconSlot $w={25}><Cyl orange={or} /></IconSlot><IconSlot $w={11} /><RowText>{n}</RowText></RowChip></TreeRow>
          ))}
          <TreeRow $pl={38}><ExpSlot><ExpRight /></ExpSlot><RowChip><IconSlot $w={22}><Eye /></IconSlot><IconSlot $w={25}><Folder /></IconSlot><IconSlot $w={11} /><RowText>Sketches</RowText></RowChip>
            <SketchHatch width="90" height="5" viewBox="0 0 90 5"><path d="M0 3H88" stroke="#6f8fc0" strokeWidth="2" strokeDasharray="3 1.500" /></SketchHatch></TreeRow>
          <TreeRow $pl={38}><ExpSlot><ExpRight /></ExpSlot><RowChip><IconSlot $w={22}><Eye /></IconSlot><IconSlot $w={25}><Folder /></IconSlot><IconSlot $w={11} /><RowText>Construction</RowText></RowChip></TreeRow>
        </Tree>
        <Panel $top={512}>
          <DoubleArrow />
          <PanelTitle>COMMENTS</PanelTitle><PlusBtn /><Grip />
        </Panel>

        <ViewCube><CubeFace>TOP</CubeFace></ViewCube>
        <AxisTag $c="#a6e6a6" $x={1292} $y={21}>Y</AxisTag>
        <AxisTag $c="#f2a6a6" $x={1340} $y={27}>X</AxisTag>
        <AxisTag $c="#a4a4f2" $x={1298} $y={70}>Z</AxisTag>

        <NavBar>
          <NavIcon $ml={3} width="16" height="18" viewBox="0 0 16 18"><ellipse cx="8" cy="9" rx="7" ry="4" fill="none" stroke="#555" /><ellipse cx="7" cy="9" rx="3.500" ry="7.500" fill="none" stroke="#555" /><path d="M7 6V12M4 9H10" stroke={B} strokeWidth="1.500" /></NavIcon>
          <NavCaret $ml={5} />
          <NavIcon $ml={6} width="16" height="16" viewBox="0 0 16 16"><rect x=".500" y="4.500" width="15" height="11" fill="#f6f6f6" stroke="#444" /><rect x="3" y="8" width="10" height="4" fill="#aab" stroke="#444" /><path d="M2 4L4 1L6 3L9 1V4" fill="#555" /></NavIcon>
          <HandWrap><Hand size={18} strokeWidth={1.300} color="#333" /></HandWrap>
          <NavIcon $ml={6} width="18" height="18" viewBox="0 0 18 18"><circle cx="6.500" cy="8" r="5" fill="#f4f8fb" stroke="#555" /><path d="M10 12L15 16.500" stroke="#333" strokeWidth="2.200" /><path d="M11.500 3H16M13.700 .800V5.200M11.500 7H16" stroke="#555" /></NavIcon>
          <NavIcon $ml={7} width="18" height="18" viewBox="0 0 18 18"><circle cx="7.500" cy="7.500" r="6.500" fill="#f4f8fb" stroke="#444" /><rect x="4.500" y="4.500" width="6" height="6" fill="none" stroke="#444" /><path d="M12 12L17 17" stroke="#333" strokeWidth="2.200" /></NavIcon>
          <NavCaret $ml={7} />
          <NavIcon $ml={13} width="16" height="16" viewBox="0 0 16 16"><rect x=".500" y=".500" width="15" height="11" fill="#9fc0de" stroke="#445" /><path d="M8 12V14M4 15H12" stroke="#445" strokeWidth="1.300" /></NavIcon>
          <NavCaret $ml={2} />
          <NavIcon $ml={6} width="15" height="16" viewBox="0 0 15 16"><rect width="15" height="16" fill="#8c8c98" /><path d="M3 0V16M6 0V16M9 0V16M12 0V16M0 3H15M0 6H15M0 9H15M0 12H15" stroke="#e8e8ee" strokeWidth=".8" /></NavIcon>
          <NavCaret $ml={3} />
          <NavIcon $ml={4} width="16" height="14" viewBox="0 0 16 14"><rect x=".500" y=".500" width="15" height="13" rx="1" fill="#fff" stroke="#3d5680" /><rect x="2" y="2" width="5.500" height="4.500" fill="#8fb2d8" /><rect x="8.500" y="2" width="5.500" height="4.500" fill="#8fb2d8" /><rect x="2" y="7.500" width="5.500" height="4.500" fill="#8fb2d8" /><rect x="8.500" y="7.500" width="5.500" height="4.500" fill="#8fb2d8" /></NavIcon>
          <NavCaret $ml={2} />
        </NavBar>

        <Palette>
          <PalHead>
            <Grip $mr={6} />
            <RoundBtn $mr={4} />
            <PanelTitle>SKETCH PALETTE</PanelTitle>
            <svg width="11" height="8" viewBox="0 0 11 8"><path d="M0 0V8L5 4ZM6 0V8L11 4Z" fill="#333" /></svg>
          </PalHead>
          <PalBody>
            <ScrollTrack><ScrollThumb /></ScrollTrack>
            <SecRow><SecCaret />Contextual Options</SecRow>
            <OptRow><OptLabel>Curvature Comb</OptLabel><OptIcon><svg width="16" height="14" viewBox="0 0 16 14"><path d="M1 13V9C2 4 5 1 8 1C11 1 14 4 15 9V13" fill="none" stroke={B} /><path d="M4 13C4 9 6 6 8 5C10 6 12 9 12 13" fill="none" stroke="#555" /></svg></OptIcon></OptRow>
            <SecRow><SecCaret />Options</SecRow>
            <OptRow><OptLabel>Construction</OptLabel><OptIcon><svg width="16" height="14" viewBox="0 0 16 14"><path d="M1 7L11 3M1 7L11 11" stroke="#444" fill="none" /><path d="M3 7H16M10 1L14 13M14 1L10 13" stroke="#f08a10" strokeDasharray="2 1.500" fill="none" /></svg></OptIcon></OptRow>
            <OptRow><OptLabel>Look At</OptLabel><OptIcon><svg width="16" height="16" viewBox="0 0 16 16"><rect x=".500" y="4.500" width="15" height="11" rx="1" fill="#f6f6f6" stroke="#444" /><rect x="3" y="8" width="10" height="4" fill="#aab" stroke="#444" /><path d="M2 4L4 1L6 3L9 1V4" fill="#555" /></svg></OptIcon></OptRow>
            {opts.map(([l, on]) => (
              <OptRow key={l}><OptLabel>{l}</OptLabel><Check>{on ? checkMark : null}</Check></OptRow>
            ))}
          </PalBody>
          <PalFoot><FinishBtn>Finish Sketch</FinishBtn></PalFoot>
        </Palette>
      </Viewport>
      <Timeline>
        <ScrollBar />
        <TimelineRow>
          <Controls>
            <svg width="12" height="14" viewBox="0 0 12 14"><path d="M0 0H2V14H0ZM12 0V14L3 7Z" fill="#444" /></svg>
            <svg width="13" height="14" viewBox="0 0 13 14"><path d="M9 0V14L0 7ZM10 4H13V10H10Z" fill="#444" /></svg>
            <svg width="12" height="16" viewBox="0 0 12 16"><path d="M0 0L12 8L0 16Z" fill="#444" /></svg>
            <svg width="13" height="14" viewBox="0 0 13 14"><path d="M4 0V14L13 7ZM0 4H3V10H0Z" fill="#444" /></svg>
            <svg width="12" height="14" viewBox="0 0 12 14"><path d="M10 0H12V14H10ZM0 0V14L9 7Z" fill="#444" /></svg>
          </Controls>
          <Track>
            {tl.map((k, i) => <Step key={i} $fade={i > 33}><TL k={k} /><Tick /></Step>)}
          </Track>
        </TimelineRow>
        <Marker width="14" height="33" viewBox="0 0 14 33"><path d="M1 0H13V1L8 8.500V33H6V8.500L1 1Z" fill="#5a5a5a" /></Marker>
        <Dashes />
        <GearSlot><FaCog size={17} /></GearSlot>
      </Timeline>
    </Page>
  );
}
